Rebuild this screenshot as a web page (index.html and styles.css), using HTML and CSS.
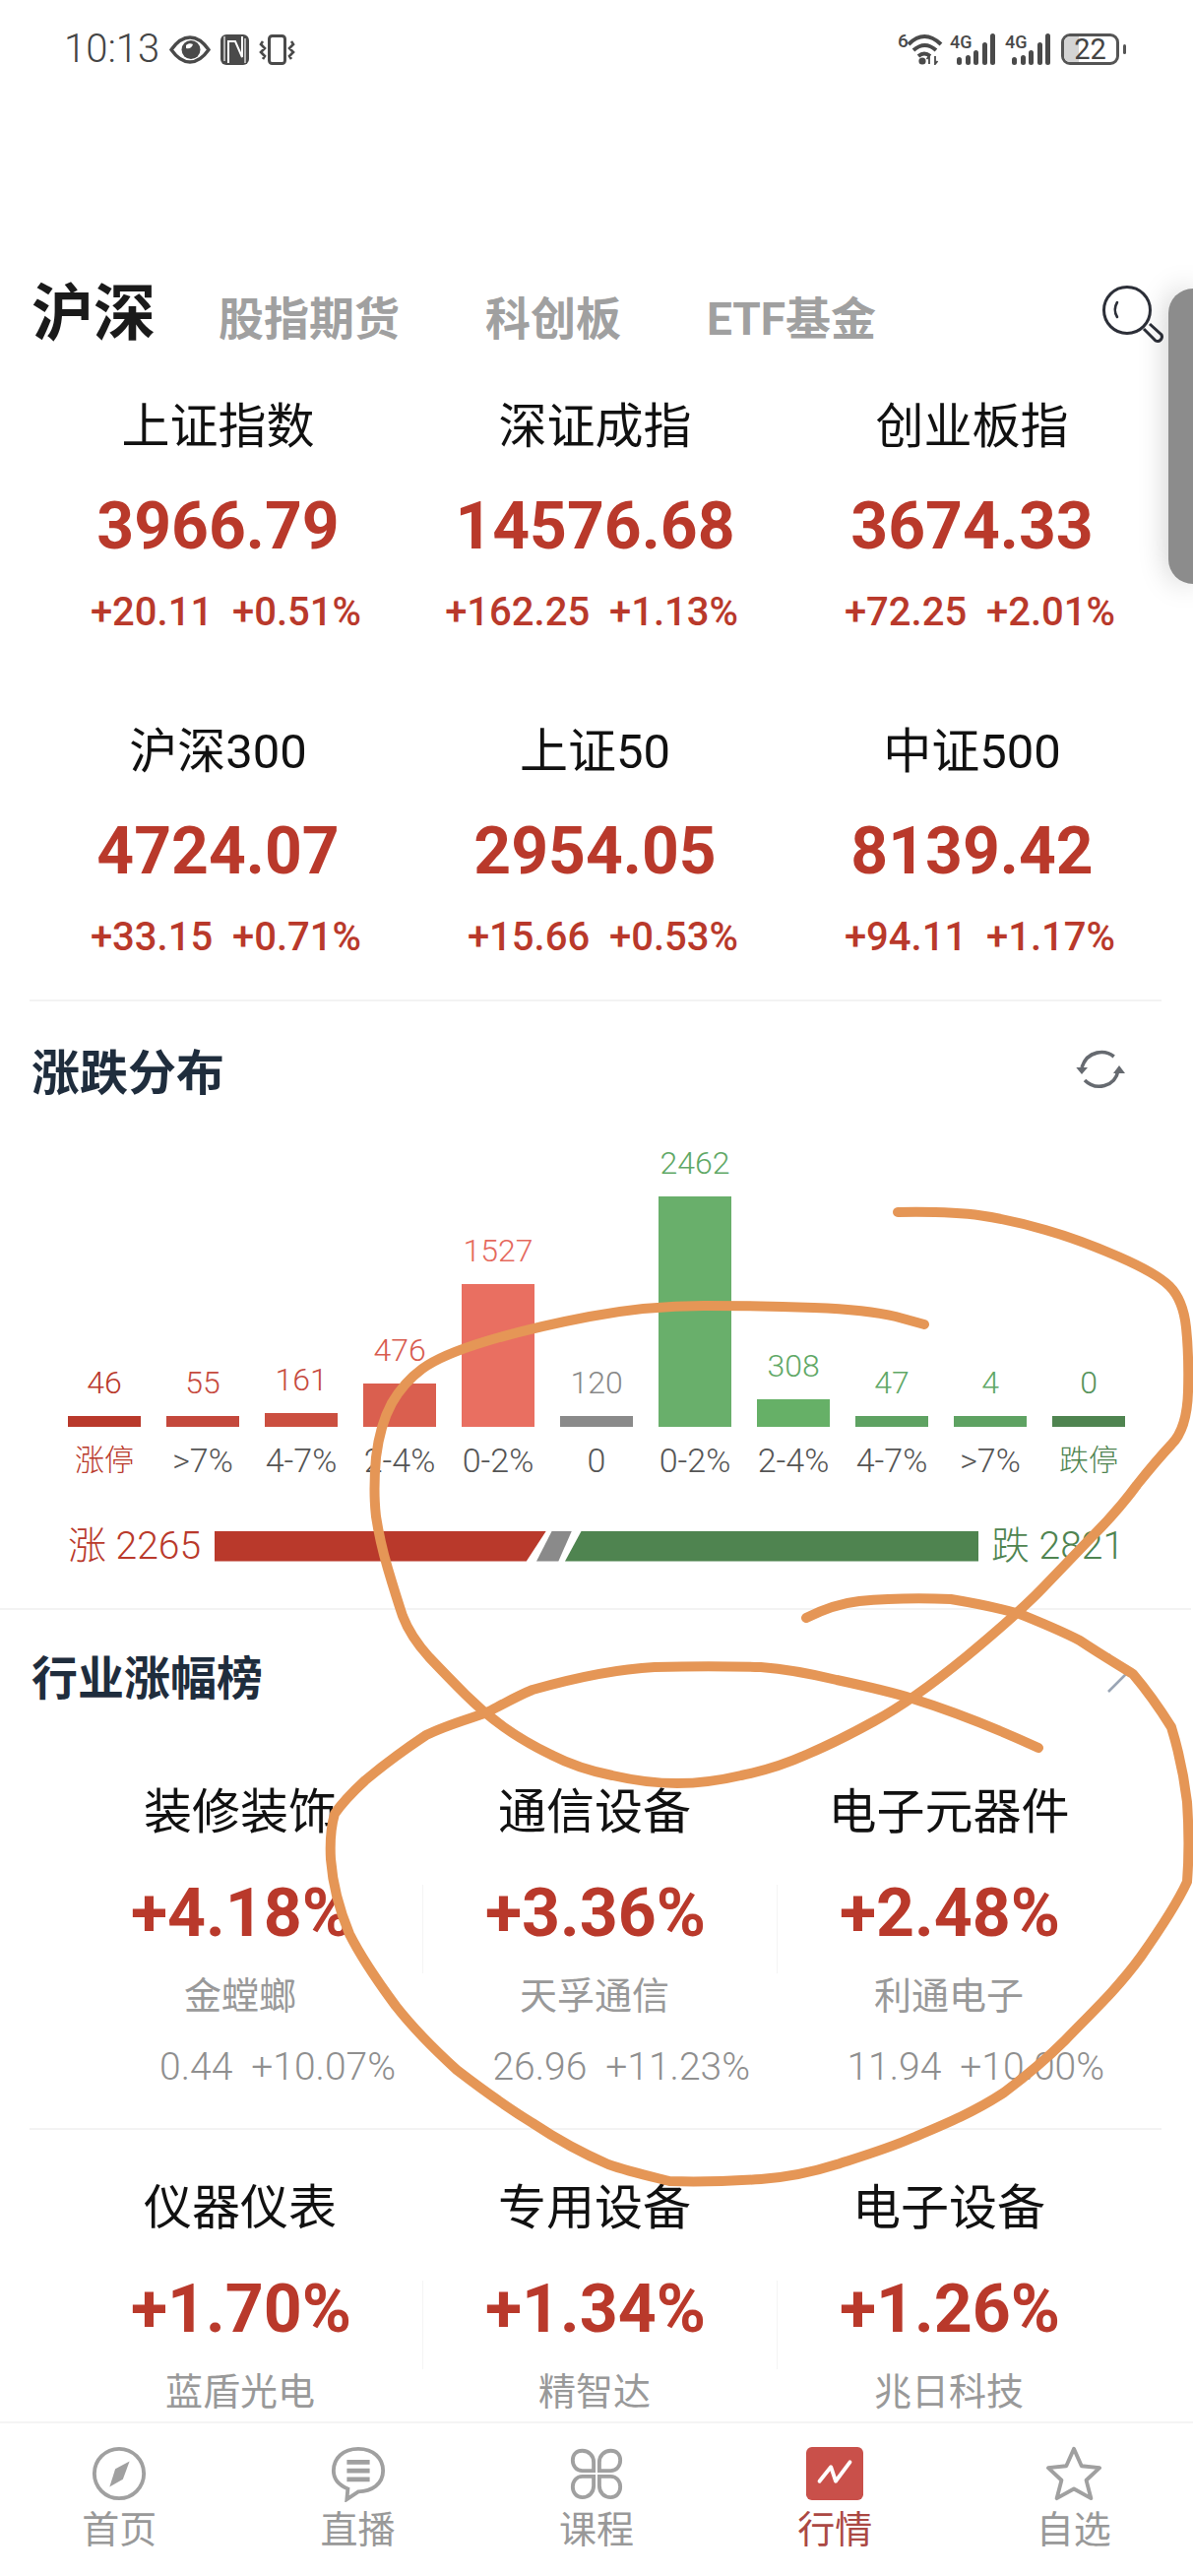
FILE: index.html
```html
<!DOCTYPE html>
<html lang="zh">
<head>
<meta charset="utf-8">
<title>行情</title>
<link rel="stylesheet" href="styles.css">
</head>
<body>
<div class="app">
  <main class="page">
    <header class="status">
      <div class="status-left">
        <span class="time">10:13</span>
        <svg class="ic-eye" viewBox="0 0 42 29"><path d="M2 14.5 C8 6 14 2 21 2 C28 2 34 6 40 14.5 C34 23 28 27 21 27 C14 27 8 23 2 14.5Z" fill="none" stroke="#4a4a4a" stroke-width="3.4"/><circle cx="22" cy="14.5" r="9.5" fill="#4a4a4a"/><path d="M17 10 C19 8 22 8 24 9 C23 12 21 14 17 13Z" fill="#fff"/></svg>
        <svg class="ic-nfc" viewBox="0 0 29 31"><rect x="0" y="0" width="29" height="31" rx="6" fill="#4a4a4a"/><path d="M8 29 V7 L15 7 L22 23 V2" fill="none" stroke="#fff" stroke-width="2"/><path d="M4 2 V27 M25 4 V29" stroke="#fff" stroke-width="1.2"/></svg>
        <svg class="ic-vib" viewBox="0 0 37 31"><rect x="10.5" y="1.5" width="16" height="28" rx="3" fill="none" stroke="#4a4a4a" stroke-width="3"/><path d="M4 7 l-2 3 l4 4 l-4 4 l4 4 l-2 3 M33 7 l2 3 l-4 4 l4 4 l-4 4 l2 3" fill="none" stroke="#4a4a4a" stroke-width="2.6"/></svg>
      </div>
      <div class="status-right">
        <div class="wifi">
          <span class="net-six">6</span>
          <svg class="ic-wifi" viewBox="0 0 36 32"><g fill="none" stroke="#4a4a4a" stroke-width="4"><path d="M1 11 Q17 -5 34 11"/><path d="M6 17 Q17.5 7 29 17"/><path d="M11 23 Q17 18 23 23"/></g><circle cx="15" cy="28" r="3.6" fill="#4a4a4a"/><path d="M22 31 V23 l-2.5 3 M28 23 V31 l2.5 -3" fill="none" stroke="#4a4a4a" stroke-width="1.8"/></svg>
        </div>
        <div class="signal"><span class="net">4G</span><span class="bars"><i class="b1"></i><i class="b2"></i><i class="b3"></i><i class="b4"></i><i class="b5"></i></span></div>
        <div class="signal sig-two"><span class="net">4G</span><span class="bars"><i class="b1"></i><i class="b2"></i><i class="b3"></i><i class="b4"></i><i class="b5"></i></span></div>
        <div class="battery"><span class="batt-fill"></span><span class="batt-num">22</span></div>
        <span class="batt-nub"></span>
      </div>
    </header>

    <nav class="tabs">
      <span class="tab-active">沪深</span>
      <span class="tab">股指期货</span>
      <span class="tab">科创板</span>
      <span class="tab">ETF基金</span>
      <svg class="ic-search" viewBox="0 0 70 70"><circle cx="28" cy="27" r="23.5" fill="none" stroke="#2c2f38" stroke-width="3"/><path d="M18 19 C15 24 15 29 18 34" fill="none" stroke="#2c2f38" stroke-width="2.6" stroke-linecap="round"/><path d="M45 46 L57 58 a4.5 4.5 0 0 0 6 -6 L51 41" fill="none" stroke="#2c2f38" stroke-width="3"/></svg>
    </nav>

    <section class="indexes">
      <div class="idx"><div class="idx-name">上证指数</div><div class="idx-val">3966.79</div><div class="idx-chg">+20.11&nbsp; +0.51%</div></div>
      <div class="idx"><div class="idx-name">深证成指</div><div class="idx-val">14576.68</div><div class="idx-chg">+162.25&nbsp; +1.13%</div></div>
      <div class="idx"><div class="idx-name">创业板指</div><div class="idx-val">3674.33</div><div class="idx-chg">+72.25&nbsp; +2.01%</div></div>
      <div class="idx"><div class="idx-name">沪深300</div><div class="idx-val">4724.07</div><div class="idx-chg">+33.15&nbsp; +0.71%</div></div>
      <div class="idx"><div class="idx-name">上证50</div><div class="idx-val">2954.05</div><div class="idx-chg">+15.66&nbsp; +0.53%</div></div>
      <div class="idx"><div class="idx-name">中证500</div><div class="idx-val">8139.42</div><div class="idx-chg">+94.11&nbsp; +1.17%</div></div>
    </section>

    <section class="dist">
      <div class="sec-head">
        <h2 class="sec-title title-dist">涨跌分布</h2>
        <svg class="ic-refresh" viewBox="0 0 50 40"><g fill="none" stroke="#666a70" stroke-width="3.6"><path d="M38.7 7 C30 0 12 0 6 18"/><path d="M9 31 C20 42 40 38 43 21"/></g><path d="M0.3 18 L12 18 L6 25Z M38 24 L50 24 L44 16Z" fill="#666a70"/></svg>
      </div>
      <div class="chart">
        <div class="col"><span class="num c-r1">46</span><span class="bar bg-r1 h11"></span></div>
        <div class="col"><span class="num c-r2">55</span><span class="bar bg-r2 h11"></span></div>
        <div class="col"><span class="num c-r2">161</span><span class="bar bg-r3 h14"></span></div>
        <div class="col"><span class="num c-r3">476</span><span class="bar bg-r4 h44"></span></div>
        <div class="col"><span class="num c-r4">1527</span><span class="bar bg-r5 h145"></span></div>
        <div class="col"><span class="num c-g0">120</span><span class="bar bg-g0 h11"></span></div>
        <div class="col"><span class="num c-gr">2462</span><span class="bar bg-g1 h234"></span></div>
        <div class="col"><span class="num c-gr">308</span><span class="bar bg-g2 h28"></span></div>
        <div class="col"><span class="num c-gr">47</span><span class="bar bg-g3 h11"></span></div>
        <div class="col"><span class="num c-gr">4</span><span class="bar bg-g3 h11"></span></div>
        <div class="col"><span class="num c-gr2">0</span><span class="bar bg-g4 h11"></span></div>
      </div>
      <div class="labels">
        <span class="lab lab-cn c-r1">涨停</span><span class="lab">&gt;7%</span><span class="lab">4-7%</span><span class="lab">2-4%</span><span class="lab">0-2%</span><span class="lab">0</span><span class="lab">0-2%</span><span class="lab">2-4%</span><span class="lab">4-7%</span><span class="lab">&gt;7%</span><span class="lab lab-cn c-dk">跌停</span>
      </div>
      <div class="totals">
        <span class="tot c-r1">涨 2265</span>
        <div class="ratio">
          <span class="ratio-up"></span>
          <span class="ratio-flat"></span>
          <span class="ratio-down"></span>
        </div>
        <span class="tot tot-down c-dk">跌 2821</span>
      </div>
    </section>

    <section class="sectors">
      <div class="sec-head head-sector">
        <h2 class="sec-title">行业涨幅榜</h2>
        <svg class="ic-chev" viewBox="0 0 24 42"><path d="M2 2 L21 21 L2 40" fill="none" stroke="#9aa5b5" stroke-width="2.6"/></svg>
      </div>
      <div class="sec-row first">
        <div class="cell"><div class="s-name">装修装饰</div><div class="s-val">+4.18%</div><div class="s-sub">金螳螂</div><div class="s-price">0.44&nbsp; +10.07%</div></div>
        <div class="cell"><div class="s-name">通信设备</div><div class="s-val">+3.36%</div><div class="s-sub">天孚通信</div><div class="s-price">26.96&nbsp; +11.23%</div></div>
        <div class="cell"><div class="s-name">电子元器件</div><div class="s-val">+2.48%</div><div class="s-sub">利通电子</div><div class="s-price">11.94&nbsp; +10.00%</div></div>
      </div>
      <div class="sec-row second">
        <div class="cell"><div class="s-name">仪器仪表</div><div class="s-val">+1.70%</div><div class="s-sub">蓝盾光电</div></div>
        <div class="cell"><div class="s-name">专用设备</div><div class="s-val">+1.34%</div><div class="s-sub">精智达</div></div>
        <div class="cell"><div class="s-name">电子设备</div><div class="s-val">+1.26%</div><div class="s-sub">兆日科技</div></div>
      </div>
    </section>
  </main>

  <footer class="tabbar">
    <div class="tb-item">
      <svg class="tb-ic" viewBox="0 0 60 60"><circle cx="30" cy="30" r="26" fill="none" stroke="#a0a0a0" stroke-width="4"/><path d="M41 17 L34 36 L20 44 L26 25Z" fill="#a0a0a0"/></svg>
      <span class="tb-label">首页</span>
    </div>
    <div class="tb-item">
      <svg class="tb-ic" viewBox="0 0 60 60"><path d="M30 4 C46 4 56 14 56 27 C56 41 44 49 30 49 L18 57 L19 46 C9 42 4 35 4 27 C4 14 14 4 30 4Z" fill="none" stroke="#a0a0a0" stroke-width="4"/><path d="M18 18 H42 M18 27 H42 M18 36 H42" stroke="#a0a0a0" stroke-width="5"/></svg>
      <span class="tb-label">直播</span>
    </div>
    <div class="tb-item">
      <svg class="tb-ic" viewBox="0 0 60 60"><g fill="none" stroke="#a0a0a0" stroke-width="4"><path d="M15 6 C22 6 27 11 27 18 V27 H15 C9 27 5 22 5 16 C5 10 9 6 15 6Z"/><path d="M45 6 C38 6 33 11 33 18 V27 H45 C51 27 55 22 55 16 C55 10 51 6 45 6Z"/><path d="M15 55 C22 55 27 50 27 43 V33 H15 C9 33 5 38 5 44 C5 50 9 55 15 55Z"/><path d="M45 55 C38 55 33 50 33 43 V33 H45 C51 33 55 38 55 44 C55 50 51 55 45 55Z"/></g></svg>
      <span class="tb-label">课程</span>
    </div>
    <div class="tb-item">
      <svg class="tb-ic" viewBox="0 0 60 60"><rect x="0" y="2" width="60" height="56" rx="6" fill="#c9504a"/><path d="M14 38 L26 23 L31 38 L46 18" fill="none" stroke="#fff" stroke-width="4" stroke-linejoin="round" stroke-linecap="round"/></svg>
      <span class="tb-label tb-active">行情</span>
    </div>
    <div class="tb-item">
      <svg class="tb-ic" viewBox="0 0 60 60"><path d="M30 4 L38 22 L57 24 L43 37 L48 56 L30 46 L12 56 L17 37 L3 24 L22 22Z" fill="none" stroke="#a0a0a0" stroke-width="4" stroke-linejoin="round"/></svg>
      <span class="tb-label">自选</span>
    </div>
  </footer>

  <div class="handle"></div>

  <svg class="scribble" viewBox="0 0 1212 2616">
    <path class="ink" d="M912 1231 Q966 1230 997 1234.5 Q1028 1239 1062 1249 Q1097 1259 1136 1276 Q1175 1293 1188 1306 Q1202 1320 1205 1348 Q1208 1376 1207 1413 Q1206 1451 1190 1467 Q1175 1483 1155 1508 Q1136 1534 1109 1561 Q1082 1589 1059 1613 Q1036 1637 982 1682 Q927 1727 888 1748 Q850 1769 819 1782 Q788 1796 753 1803 Q719 1811 688 1811 Q657 1811 622 1803 Q587 1796 560 1782 Q533 1769 512 1754 Q491 1739 473 1721 Q456 1704 436 1683 Q417 1662 409 1641 Q402 1620 394 1593 Q386 1566 382 1540 Q379 1514 382 1480 Q386 1447 398 1425 Q410 1404 429 1390 Q448 1376 494 1362 Q541 1348 599 1337 Q657 1326 715 1326 Q773 1326 827 1328 Q881 1330 910 1337 L939 1345"/>
    <path class="ink" d="M819 1643 C835 1635 855 1628 873 1626 C905 1623 940 1623 966 1624 C990 1628 1015 1633 1036 1639 C1058 1648 1078 1656 1097 1666 C1118 1680 1135 1690 1151 1700 C1168 1720 1180 1738 1190 1754 C1198 1780 1203 1805 1206 1830 C1208 1860 1208 1885 1206 1911 C1195 1935 1178 1960 1159 1987 C1135 2020 1108 2045 1082 2072 C1062 2092 1040 2110 1020 2125 C990 2145 958 2158 927 2171 C902 2182 875 2190 850 2198 C825 2206 800 2211 773 2213 C742 2215 710 2216 680 2215 C660 2210 638 2205 618 2198 C590 2186 565 2172 541 2156 C515 2140 490 2122 464 2102 C442 2082 420 2060 402 2037 C385 2014 368 1990 355 1964 C345 1940 338 1914 336 1888 C335 1870 336 1856 340 1842 C348 1830 358 1820 371 1808 C390 1792 412 1776 433 1762 C453 1752 475 1746 495 1739 C512 1730 526 1722 541 1716 C580 1705 625 1695 665 1693 C700 1692 740 1692 773 1693 C800 1695 825 1700 850 1706 C878 1712 905 1718 927 1725 C975 1740 1018 1758 1055 1775"/>
  </svg>
</div>
</body>
</html>
```
FILE: styles.css
```css
* { box-sizing: border-box; }
html, body { margin: 0; padding: 0; background: #fff; }
body { font-family: Roboto, "Noto Sans CJK SC", sans-serif; }
.app { position: relative; width: 1212px; height: 2616px; overflow: hidden; background: #fff; display: flex; flex-direction: column; }
.page { height: 2459px; overflow: hidden; flex: none; }

/* status bar */
.status { height: 100px; margin-bottom: 180px; padding: 0 68px 0 65px; display: flex; justify-content: space-between; align-items: center; color: #4a4a4a; }
.status-left { display: flex; align-items: center; gap: 10px; }
.time { font-size: 40px; font-weight: 300; line-height: 44px; color: #444; }
.ic-eye { width: 42px; height: 29px; }
.ic-nfc { width: 29px; height: 31px; }
.ic-vib { width: 37px; height: 31px; }
.status-right { display: flex; align-items: center; }
.wifi { display: flex; align-items: flex-start; width: 46px; height: 32px; margin-right: 7px; }
.net-six { font-size: 19px; font-weight: 500; line-height: 15px; width: 10px; flex: none; }
.ic-wifi { width: 36px; height: 32px; flex: none; }
.signal { display: flex; align-items: flex-end; height: 32px; width: 46px; position: relative; margin-right: 10px; }
.sig-two { margin-right: 11px; }
.net { position: absolute; left: 0; top: 1px; font-size: 18px; font-weight: 500; line-height: 15px; }
.bars { margin-left: auto; display: flex; align-items: flex-end; gap: 3.5px; }
.bars i { width: 5px; background: #4a4a4a; display: block; border-radius: 2.5px; }
.b1 { height: 8px; } .b2 { height: 10px; } .b3 { height: 15px; } .b4 { height: 23px; } .b5 { height: 32px; }
.battery { width: 59px; height: 32px; border: 3px solid #555; border-radius: 9px; position: relative; display: flex; align-items: center; justify-content: center; overflow: hidden; }
.batt-fill { position: absolute; left: 0; top: 0; bottom: 0; width: 15px; background: #d4d4d4; }
.batt-num { position: relative; font-size: 29px; line-height: 28px; color: #444; }
.batt-nub { width: 3px; height: 10px; background: #555; border-radius: 2px; margin-left: 4px; }

/* tabs */
.tabs { height: 80px; padding-left: 32px; display: flex; align-items: flex-start; }
.tab-active { font-size: 63px; font-weight: 700; line-height: 66px; color: #1a1a1a; margin-right: 64px; font-family: "Noto Sans CJK SC", sans-serif; }
.tab { font-size: 46px; font-weight: 700; line-height: 66px; color: #a0a0a0; margin-top: 11px; margin-right: 87px; }
.tab:nth-of-type(4) { margin-right: 0; }
.ic-search { width: 70px; height: 70px; margin-left: auto; margin-right: 25px; margin-top: 8px; flex: none; }

/* index grid */
.indexes { margin: 44px 32px 0 30px; padding-bottom: 38px; display: grid; grid-template-columns: repeat(3, 383px); row-gap: 87px; border-bottom: 2px solid #f3f3f3; }
.idx { text-align: center; }
.idx-name { font-size: 49px; line-height: 60px; color: #111; }
.idx-val { font-size: 66px; font-weight: 700; line-height: 80px; color: #b9392b; margin-top: 31px; }
.idx-chg { font-size: 40px; font-weight: 500; line-height: 50px; color: #b9392b; margin-top: 22px; padding-right: 46px; text-align: right; white-space: nowrap; }

/* distribution */
.dist { padding: 32px 30px 43px; margin-right: 2px; border-bottom: 2px solid #f3f3f3; }
.sec-head { height: 74px; display: flex; align-items: center; justify-content: space-between; }
.sec-title { margin: 0; font-size: 47px; font-weight: 700; line-height: 60px; color: #1f2d3d; padding-left: 2px; font-family: "Noto Sans CJK SC", sans-serif; }
.title-dist { font-size: 49px; }
.ic-refresh { width: 50px; height: 40px; margin-right: 37px; }
.chart { height: 326px; padding-left: 39px; display: flex; gap: 26px; align-items: flex-end; }
.col { width: 74px; display: flex; flex-direction: column; align-items: center; }
.num { font-size: 32px; font-weight: 300; line-height: 40px; margin-bottom: 14px; white-space: nowrap; }
.bar { display: block; width: 100%; }
.h11 { height: 11px; } .h14 { height: 14px; } .h28 { height: 28px; } .h44 { height: 44px; } .h145 { height: 145px; } .h234 { height: 234px; }
.c-r1 { color: #b9392b; } .c-r2 { color: #c64a3e; } .c-r3 { color: #d85c4f; } .c-r4 { color: #e5695d; }
.c-g0 { color: #888; } .c-gr { color: #5fa866; } .c-gr2 { color: #55935a; } .c-dk { color: #4f8450; }
.bg-r1 { background: #b9392b; } .bg-r2 { background: #c4483c; } .bg-r3 { background: #cb4f40; } .bg-r4 { background: #da5f4f; } .bg-r5 { background: #e96f61; }
.bg-g0 { background: #8a8a8a; } .bg-g1 { background: #69af6b; } .bg-g2 { background: #66b067; } .bg-g3 { background: #5ea262; } .bg-g4 { background: #4f8450; }
.labels { margin-top: 14px; padding-left: 39px; display: flex; gap: 26px; }
.lab { width: 74px; text-align: center; font-size: 34px; font-weight: 300; line-height: 40px; color: #555; white-space: nowrap; }
.lab.lab-cn { font-size: 30px; }
.lab.c-r1 { color: #b9392b; } .lab.c-dk { color: #4f8450; }
.totals { margin-top: 47px; height: 40px; padding-left: 39px; display: flex; align-items: center; }
.tot { font-size: 39px; font-weight: 300; line-height: 40px; white-space: nowrap; width: 149px; }
.tot-down { width: auto; margin-left: 13px; }
.ratio { width: 776px; height: 31px; position: relative; flex: none; }
.ratio span { position: absolute; top: 0; bottom: 0; display: block; }
.ratio-up { left: 0; width: 337px; background: #b9392b; clip-path: polygon(0 0, 100% 0, 94% 100%, 0 100%); }
.ratio-flat { left: 327px; width: 36px; background: #8a8a8a; clip-path: polygon(44% 0, 100% 0, 62% 100%, 0 100%); }
.ratio-down { left: 356px; width: 420px; background: #4f8450; clip-path: polygon(4% 0, 100% 0, 100% 100%, 0 100%); }

/* sector */
.sectors { padding: 29px 0 0; }
.head-sector { padding: 0 30px; }
.ic-chev { width: 24px; height: 42px; margin-right: 34px; margin-bottom: 4px; }
.sec-row { margin: 0 32px 0 30px; padding-left: 40px; display: grid; grid-template-columns: repeat(3, 360px); }
.sec-row.first { padding-top: 73px; padding-bottom: 37px; border-bottom: 2px solid #f3f3f3; }
.sec-row.second { padding-top: 50px; }
.cell { padding-right: 12px; text-align: center; }
.s-name { font-size: 49px; line-height: 60px; color: #111; white-space: nowrap; }
.s-val { position: relative; font-size: 68px; font-weight: 700; line-height: 80px; color: #b9392b; margin-top: 32px; padding-left: 2px; }
.s-val::after { content: ""; position: absolute; right: -12px; top: 11px; height: 90px; width: 1px; background: #f4f4f4; }
.cell:last-child .s-val::after { display: none; }
.s-sub { font-size: 38px; line-height: 50px; color: #999; margin-top: 19px; }
.s-price { font-size: 39px; font-weight: 300; line-height: 50px; color: #8f8f8f; margin-top: 22px; padding-right: 16px; text-align: right; white-space: nowrap; }

/* bottom bar */
.tabbar { height: 157px; flex: none; background: #fff; border-top: 2px solid #f4f4f4; display: flex; }
.tb-item { width: 242.4px; display: flex; flex-direction: column; align-items: center; padding-top: 22px; }
.tb-ic { width: 60px; height: 58px; }
.tb-label { font-size: 38px; line-height: 50px; color: #999; margin-top: 3px; }
.tb-active { color: #ab4843; }

/* overlays */
.handle { position: absolute; right: 0; top: 293px; width: 25px; height: 300px; background: #8c8c8c; border-radius: 32px 0 0 32px; box-shadow: 0 0 30px rgba(0,0,0,.22); }
.scribble { position: absolute; left: 0; top: 0; width: 1212px; height: 2616px; pointer-events: none; }
.ink { fill: none; stroke: #e59656; stroke-width: 10; stroke-linecap: round; stroke-linejoin: round; }
```
